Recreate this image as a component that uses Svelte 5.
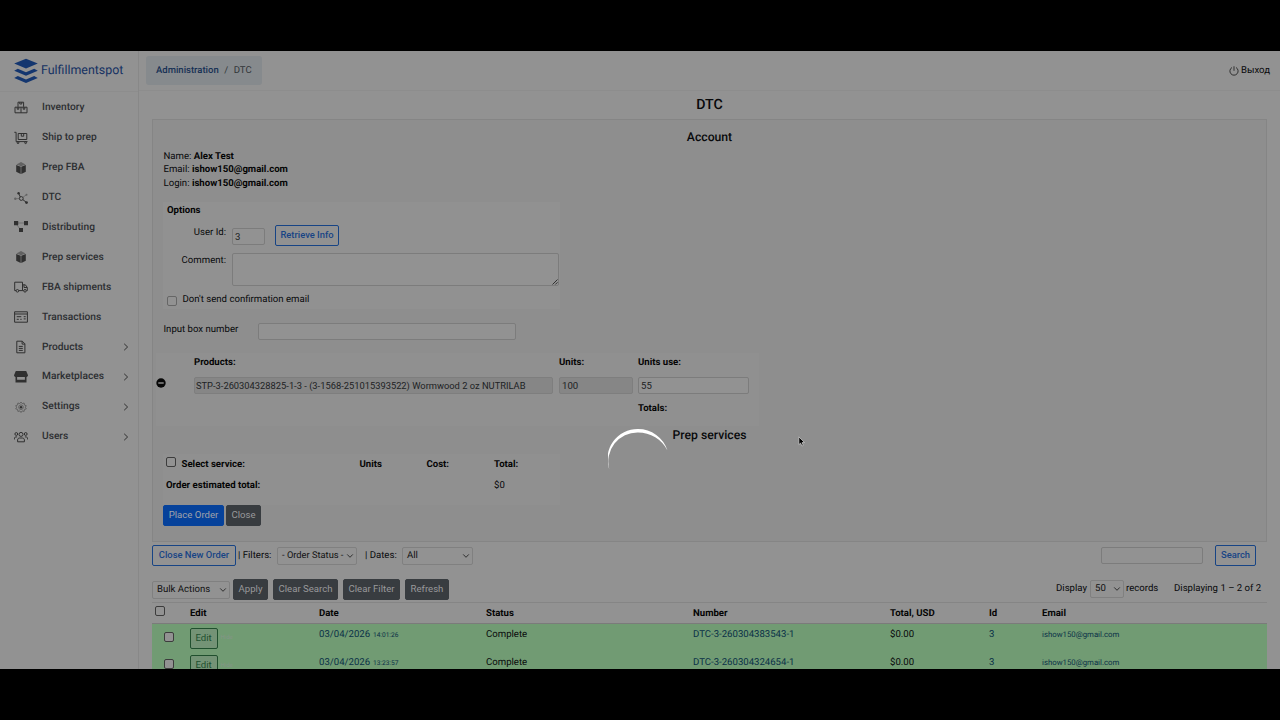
<script lang="ts">
	interface MenuItem {
		label: string;
		icon: string;
		expandable?: boolean;
	}

	const menu: MenuItem[] = [
		{ label: 'Inventory', icon: 'inventory' },
		{ label: 'Ship to prep', icon: 'cart' },
		{ label: 'Prep FBA', icon: 'box' },
		{ label: 'DTC', icon: 'nodes' },
		{ label: 'Distributing', icon: 'diagram' },
		{ label: 'Prep services', icon: 'box' },
		{ label: 'FBA shipments', icon: 'truck' },
		{ label: 'Transactions', icon: 'card' },
		{ label: 'Products', icon: 'file', expandable: true },
		{ label: 'Marketplaces', icon: 'store', expandable: true },
		{ label: 'Settings', icon: 'gear', expandable: true },
		{ label: 'Users', icon: 'users', expandable: true }
	];

	const orders = [
		{ time: '14:01:26', number: 'DTC-3-260304383543-1' },
		{ time: '13:23:57', number: 'DTC-3-260304324654-1' }
	];

	let userId = $state('3');
	let unitsUse = $state('55');
</script>

{#snippet menuIcon(name: string)}
	<svg class="icon" viewBox="0 0 14 14">
		{#if name === 'inventory'}
			<path d="M4 5.8V1.2h5.6v4.6M1 6.2h12v5.6H1zM7 6.2v5.6M5.8 1.2v1.8h2V1.2M3.2 6.2v2h1.6v-2M9.2 6.2v2h1.6v-2" />
		{:else if name === 'cart'}
			<path d="M.3 1.3h1.8v9.3h11.4M4.2 2.5h8.6v6H4.2zM7.3 2.5v2.7h2.4V2.5" />
			<circle cx="4" cy="11.7" r=".9" /><circle cx="11.6" cy="11.7" r=".9" />
		{:else if name === 'box'}
			<path class="solid" d="M2.2 4 6.7 5.8v7.2l-4.5-2.2zM11.8 4 7.3 5.8v7.2l4.5-2.2z" />
			<path class="mid" d="M7 1 11.6 3.4 7 5.3 2.4 3.4z" />
		{:else if name === 'nodes'}
			<path d="M4.8 2.7 6.3 6M8.8 8.6l3.2 2.5" />
			<path class="thin" d="M9 6.2l3-2.1M5.2 7.5l-3.4.2" />
			<circle cx="7.3" cy="7.5" r="1.9" />
			<circle class="solid" cx="4.6" cy="2.3" r="1.2" /><circle class="solid" cx="12.5" cy="11.6" r="1.4" />
			<circle class="mid" cx="12.5" cy="3.8" r="1" /><circle class="mid" cx="1.3" cy="7.8" r="1.2" />
		{:else if name === 'diagram'}
			<path class="thin" d="M4 3h6M3 5l3 4" />
			<path class="solid" d="M0 1h4.2v4.2H0zM10 1h4v4.2h-4zM5 8h4v4H5z" />
		{:else if name === 'truck'}
			<path d="M2 10.6H.7V2.2h7.8v8.4H4.9M8.5 4.8h2.8l2 2.6v3.2h-.8M9.6 10.6H8.5M10 5v2.5h3" />
			<circle cx="3.4" cy="10.8" r="1.3" /><circle cx="11" cy="10.8" r="1.3" />
		{:else if name === 'card'}
			<path d="M.6 1.8h12.8v10.4H.6zM.6 4h12.8M2.7 6.7h4.6M2.7 9.3h2.1M6.3 9.3h1.3M9.7 6.7h2M9.7 8.9h2" />
		{:else if name === 'file'}
			<path d="M2.8 1.2h5.5l2.6 2.6v9H2.8zM8.1 1.2v2.9h2.8M4.8 6.4h4M4.8 8.4h4M4.8 10.4h4" />
		{:else if name === 'store'}
			<path class="solid" d="M1.8 1h10.4L14 5.3c0 1.2-1 1.8-2 1.8H2c-1 0-2-.6-2-1.8zM1.5 7h1.6v2.8h7.8V7h1.6v5.4h-11z" />
		{:else if name === 'gear'}
			<path class="mid-line" d="m7 2 1.2 1.6 1.9-.6.3 2 1.9.7-1 1.5 1 1.7-1.9.5-.3 2-1.9-.5L7 12.5l-1.2-1.6-1.9.5-.3-2-1.9-.5 1-1.7-1-1.5 1.9-.7.3-2 1.9.6z" />
			<circle class="mid-line" cx="7" cy="7.2" r="2.3" /><circle class="solid" cx="7" cy="7.2" r="1.2" />
		{:else}
			<circle cx="7" cy="4.4" r="2" /><circle cx="2.3" cy="4" r="1.4" /><circle cx="11.7" cy="4" r="1.4" />
			<path d="M3.6 11.8V10c0-1.4 1-2 2-2h2.8c1 0 2 .6 2 2v1.8zM.5 9.4V8.2c0-.9.6-1.4 2.6-1.3M13.5 9.4V8.2c0-.9-.6-1.4-2.6-1.3" />
		{/if}
	</svg>
{/snippet}

{#snippet select(text: string, size: string)}
	<span class="select {size}">
		{text}
		<svg viewBox="0 0 8 6"><path d="m1.2 1.4 2.8 2.9 2.8-2.9" /></svg>
	</span>
{/snippet}

<div class="screen">
	<div class="app">
		<aside>
			<div class="brand">
				<svg viewBox="0 0 24 26">
					<path d="M12 .7 23.8 5.4 12 10.4.2 5.4zM.2 12.7l3.6-1.9L12 14.3l8.2-3.5 3.6 1.9L12 17.7zM.2 20l3.6-1.9 8.2 3.5 8.2-3.5 3.6 1.9L12 25z" />
				</svg>
				<span>Fulfillmentspot</span>
			</div>
			<nav>
				{#each menu as item}
					<a class="menu-item">
						{@render menuIcon(item.icon)}
						<span class="menu-label">{item.label}</span>
						{#if item.expandable}
							<svg class="arrow" viewBox="0 0 6 8"><path d="m1.2.8 3.4 3.2-3.4 3.2" /></svg>
						{/if}
					</a>
				{/each}
			</nav>
		</aside>

		<main>
			<header>
				<div class="breadcrumb"><a>Administration</a><span>/</span><span>DTC</span></div>
				<div class="logout">
					<svg viewBox="0 0 10 10"><path d="M3 1.5a4.1 4.1 0 1 0 4 0M5 .3v4.5" /></svg>
					Выход
				</div>
			</header>

			<h1>DTC</h1>

			<section class="panel">
				<h2>Account</h2>
				<div class="account">
					<div>Name: <b>Alex Test</b></div>
					<div>Email: <b>ishow150@gmail.com</b></div>
					<div>Login: <b>ishow150@gmail.com</b></div>
				</div>

				<div class="options">
					<b class="options-title">Options</b>
					<div class="user-row">
						<label for="uid">User Id:</label>
						<input id="uid" bind:value={userId} />
						<button class="btn outline">Retrieve Info</button>
					</div>
					<div class="comment-row">
						<label for="comment">Comment:</label>
						<div class="textarea" id="comment">
							<svg viewBox="0 0 6 6"><path d="M.5 5.5l5-5M3.3 5.5l2.2-2.2" /></svg>
						</div>
					</div>
					<div class="check-row"><i class="check soft"></i>Don't send confirmation email</div>
				</div>

				<div class="box-row">
					<span>Input box number</span>
					<input />
				</div>

				<div class="products">
					<b class="c-name">Products:</b><b class="c-units">Units:</b><b class="c-use">Units use:</b>
					<svg class="minus" viewBox="0 0 10 10"><circle cx="5" cy="5" r="4.7" /><path d="M2.3 5h5.4" /></svg>
					<input class="c-name" readonly value="STP-3-260304328825-1-3 - (3-1568-251015393522) Wormwood 2 oz NUTRILAB" />
					<input class="c-units" readonly value="100" />
					<input class="c-use" bind:value={unitsUse} />
					<b class="c-use">Totals:</b>
				</div>

				<h2 class="services-title">Prep services</h2>
				<div class="services">
					<i class="check"></i><b>Select service:</b><b>Units</b><b>Cost:</b><b>Total:</b>
					<b class="estimated">Order estimated total:</b><span>$0</span>
				</div>
				<div class="actions">
					<button class="btn primary w-place">Place Order</button>
					<button class="btn dark w-close">Close</button>
				</div>
			</section>

			<div class="filters">
				<button class="btn outline w-new">Close New Order</button>
				<span class="lbl-filters">| Filters:</span>
				{@render select('- Order Status -', 'w-status')}
				<span class="lbl-dates">| Dates:</span>
				{@render select('All', 'w-all')}
				<input class="search" />
				<button class="btn outline w-search">Search</button>
			</div>

			<div class="bulk">
				{@render select('Bulk Actions', 'w-bulk')}
				<button class="btn dark w-apply">Apply</button>
				<button class="btn dark w-csearch">Clear Search</button>
				<button class="btn dark w-cfilter">Clear Filter</button>
				<button class="btn dark w-refresh">Refresh</button>
				<div class="paging">
					<span class="lbl-display">Display</span>
					{@render select('50', 'w-50')}
					<span class="lbl-records">records</span>
					<span class="lbl-range">Displaying 1 – 2 of 2</span>
				</div>
			</div>

			<div class="table">
				<div class="row head">
					<i class="check"></i>
					<b>Edit</b><b>Date</b><b>Status</b><b>Number</b><b>Total, USD</b><b>Id</b><b>Email</b>
				</div>
				{#each orders as order}
					<div class="row order">
						<i class="check"></i>
						<span class="edit"><button class="btn green">Edit</button><em>Hide</em></span>
						<span class="link">03/04/2026 <small>{order.time}</small></span>
						<span>Complete</span>
						<span class="link">{order.number}</span>
						<span>$0.00</span>
						<span class="link">3</span>
						<span class="link email">ishow150@gmail.com</span>
					</div>
				{/each}
			</div>
		</main>

		<svg class="spinner" viewBox="0 0 60 60">
			<path d="M1.2 41A30 30 0 0 1 30 1A30.9 30.9 0 0 1 59.5 22.5A33.5 33.5 0 0 0 30 4.4A29.2 29.2 0 0 0 1.2 41z" />
		</svg>
		<svg class="cursor" viewBox="0 0 8 11">
			<path d="M.8.8v7.9l1.8-1.6 1.3 2.9 1.4-.6L4.1 6.6h2.5z" />
		</svg>
	</div>
</div>

<style>
	:global(body) {
		margin: 0;
		background: #000;
	}

	* {
		box-sizing: border-box;
	}

	.screen {
		width: 1280px;
		height: 720px;
		padding: 51px 0;
		background: #000;
		overflow: hidden;
	}

	.app {
		position: relative;
		display: flex;
		height: 618px;
		overflow: hidden;
		background: #929292;
		color: #08090b;
		font: 9.6px/13.4px Roboto, 'Liberation Sans', sans-serif;
		text-rendering: geometricPrecision;
	}

	b {
		font-weight: 700;
		color: #050505;
	}

	svg path,
	svg circle {
		fill: none;
		stroke: #303030;
	}

	aside {
		width: 139px;
		flex: none;
		border-right: 1px solid #888;
	}

	.brand {
		display: flex;
		align-items: center;
		gap: 3px;
		height: 41px;
		padding: 0 0 1px 14px;
		border-bottom: 1px solid #8d8d8d;
		color: #153162;
		font-size: 12.4px;
	}

	.brand svg {
		width: 24px;
		height: 26px;
	}

	.brand path {
		fill: #14366f;
		stroke: none;
	}

	.menu-item {
		display: flex;
		align-items: center;
		height: 29.95px;
		padding: 1.5px 0 0 14px;
		color: #2c2e31;
		font-size: 10.2px;
		font-weight: 500;
	}

	.icon {
		width: 14px;
		height: 14px;
		margin-right: 14px;
	}

	.icon .solid {
		fill: #303030;
		stroke: none;
	}

	.icon .mid {
		fill: #626262;
		stroke: none;
	}

	.icon .mid-line {
		stroke: #606060;
	}

	.icon .thin {
		stroke: #707070;
	}

	.menu-label {
		flex: 1;
	}

	.arrow {
		width: 6px;
		height: 8px;
		margin-right: 9px;
	}

	main {
		flex: 1;
		padding: 0 13px;
	}

	header {
		display: flex;
		justify-content: space-between;
		align-items: center;
		height: 40px;
		margin: 0 -13px;
		padding: 0 10px 1px 7px;
		border-bottom: 1px solid #8d8d8d;
	}

	.breadcrumb {
		display: flex;
		gap: 5.5px;
		width: 116px;
		height: 29px;
		padding: 8px 0 0 10px;
		border-radius: 3px;
		background: #868a8d;
		color: #303438;
	}

	.breadcrumb a {
		color: #173155;
		font-weight: 500;
		font-size: 9.5px;
	}

	.logout {
		display: flex;
		align-items: center;
		gap: 2px;
		padding-top: 1px;
	}

	.logout svg {
		width: 10px;
		height: 10px;
	}

	h1,
	h2 {
		margin: 0;
		text-align: center;
		font-weight: 500;
	}

	h1 {
		height: 28px;
		padding-top: 7px;
		font-size: 14.2px;
		line-height: 15px;
	}

	.panel {
		height: 423px;
		padding: 0 10px;
		border: 1px solid #858585;
		background: #8e8e8e;
	}

	h2 {
		height: 30px;
		padding-top: 10px;
		font-size: 12.2px;
		line-height: 15px;
	}

	.account {
		height: 52px;
		padding-left: 0.5px;
	}

	input,
	.textarea,
	.select {
		border: 1px solid #7c7c7c;
		border-radius: 2px;
		background: #929292;
		color: #202224;
		font: inherit;
		outline: none;
	}

	input {
		height: 17px;
		padding: 0 2px;
	}

	.options {
		width: 397px;
		height: 107px;
		padding-left: 4px;
		background: #919191;
	}

	.options-title {
		display: block;
		height: 24px;
		padding-top: 2px;
	}

	.user-row {
		display: flex;
		height: 28px;
	}

	.user-row label,
	.comment-row label {
		width: 59px;
		margin-right: 6px;
		text-align: right;
	}

	.user-row input {
		width: 33px;
		margin: 2px 10px 0 0;
	}

	.user-row .btn {
		margin-top: -1px;
	}

	.comment-row {
		display: flex;
		height: 39px;
	}

	.textarea {
		display: flex;
		align-items: flex-end;
		justify-content: flex-end;
		width: 327px;
		height: 33px;
		margin-top: -1px;
	}

	.textarea svg {
		width: 6px;
		height: 6px;
	}

	.check {
		width: 10px;
		height: 10px;
		border: 1px solid #3c3c3c;
		border-radius: 2px;
		background: #929292;
	}

	.check.soft {
		border-color: #666;
		margin-top: 3px;
	}

	.check-row {
		display: flex;
		gap: 5.5px;
	}

	.box-row {
		display: flex;
		align-items: flex-start;
		height: 44px;
		padding-top: 14px;
	}

	.box-row span {
		width: 95px;
		padding-left: 0.5px;
	}

	.box-row input {
		width: 258px;
	}

	.products {
		display: grid;
		grid-template-columns: 38px 365px 79px 111px;
		grid-template-rows: 21px 25px 24px;
		width: 603px;
		height: 73px;
		margin-left: -7px;
		padding-top: 3px;
		background: #909090;
	}

	.c-name {
		grid-column: 2;
		width: 359px;
	}

	input.c-name {
		padding-left: 1px;
		font-size: 9.33px;
	}

	.c-units {
		grid-column: 3;
		width: 74px;
	}

	.c-use {
		grid-column: 4;
		width: 111px;
	}

	input[readonly] {
		background: #868686;
		border-color: #7e7e7e;
	}

	.minus {
		grid-column: 1;
		width: 10px;
		height: 10px;
		margin-top: 1px;
	}

	.minus circle {
		fill: #080808;
		stroke: none;
	}

	.minus path {
		stroke: #929292;
		stroke-width: 1.4;
	}

	.services-title {
		height: 28px;
		padding-top: 2px;
	}

	.services {
		display: grid;
		grid-template-columns: 15.5px 178px 67px 67.5px 60px;
		grid-template-rows: 21px 20px;
		width: 397px;
		height: 51px;
		padding: 4px 0 0 3px;
		background: #909090;
	}

	.services .check {
		margin-top: -1px;
	}

	.estimated {
		grid-column: 1 / 5;
	}

	.actions {
		display: flex;
		gap: 2px;
	}

	.btn {
		height: 21px;
		padding: 0 0 1px;
		border: 1px solid;
		border-radius: 2px;
		background: none;
		font: inherit;
		text-align: center;
		white-space: nowrap;
	}

	.outline {
		width: 64px;
		border-color: #174485;
		color: #174485;
		font-size: 9.4px;
		font-weight: 500;
	}

	.primary {
		border-color: #06429b;
		background: #06429b;
		color: #a0a3aa;
	}

	.dark {
		border-color: #383c40;
		background: #383c40;
		color: #98999b;
	}

	.green {
		width: 28px;
		border-color: #204f2e;
		color: #204f2e;
	}

	.w-place { width: 61px; }
	.w-close { width: 35px; }
	.outline.w-new { width: 84px; }
	.outline.w-search { width: 41px; }
	.w-apply { width: 35px; }
	.w-csearch { width: 65px; }
	.w-cfilter { width: 57px; }
	.w-refresh { width: 44px; }

	.select {
		display: flex;
		flex: none;
		align-items: center;
		justify-content: space-between;
		height: 18px;
		padding: 0 2px 0 4px;
		border-color: #808080;
		white-space: nowrap;
		color: #111;
	}

	.select svg {
		width: 8px;
		height: 6px;
		flex: none;
	}

	.w-status { width: 80px; font-size: 9.3px; }
	.w-all { width: 71px; }
	.w-bulk { width: 78px; }
	.w-50 { width: 34px; }

	.filters {
		display: flex;
		align-items: center;
		height: 21px;
		margin-top: 3px;
	}

	.lbl-filters {
		width: 39px;
		margin-left: 2px;
		white-space: nowrap;
	}

	.lbl-dates {
		width: 37px;
		margin-left: 8px;
	}

	.search {
		width: 102px;
		margin: 0 12px 0 auto;
	}

	.w-search {
		margin-right: 11px;
	}

	.bulk {
		display: flex;
		align-items: center;
		gap: 5px;
		height: 21px;
		margin-top: 13px;
	}

	.w-bulk {
		margin-right: -2px;
	}

	.paging {
		display: flex;
		align-items: center;
		margin: -2px 0 0 auto;
		width: 211px;
	}

	.lbl-display { width: 34px; }
	.lbl-records { width: 50px; padding-left: 2px; }
	.lbl-range { flex: 1; padding-top: 1px; white-space: nowrap; }

	.table {
		margin-top: 2px;
		border-top: 1px solid #858585;
	}

	.row {
		display: grid;
		grid-template-columns: 38px 129px 167px 207px 197px 99px 53px 1fr;
		height: 27.5px;
	}

	.head {
		height: 21px;
		padding-top: 4px;
		border-bottom: 1px solid #7b7b7b;
	}

	.head .check {
		margin: -1px 0 0 3px;
	}

	.order {
		padding-top: 4px;
		background: #719b73;
	}

	.order .check {
		margin: 3.5px 0 0 12px;
	}

	.order .btn {
		background: #749376;
	}

	.edit {
		display: flex;
		align-items: center;
		gap: 3px;
		height: 21px;
		margin: -0.5px 0 0 -0.5px;
	}

	.edit em {
		color: #849588;
		font-size: 6px;
		font-style: normal;
	}

	.link {
		color: #0a3047;
	}

	small {
		margin-left: 0.5px;
		font-size: 6.6px;
	}

	.email {
		font-size: 7.8px;
	}

	.spinner {
		position: absolute;
		left: 608px;
		top: 377px;
		width: 60px;
		height: 60px;
	}

	.spinner path {
		fill: #fff;
		stroke: none;
	}

	.cursor {
		position: absolute;
		left: 798px;
		top: 385px;
		width: 8px;
		height: 11px;
	}

	.cursor path {
		fill: #000;
		stroke: #c8c8c8;
		stroke-width: 0.8;
	}
</style>
